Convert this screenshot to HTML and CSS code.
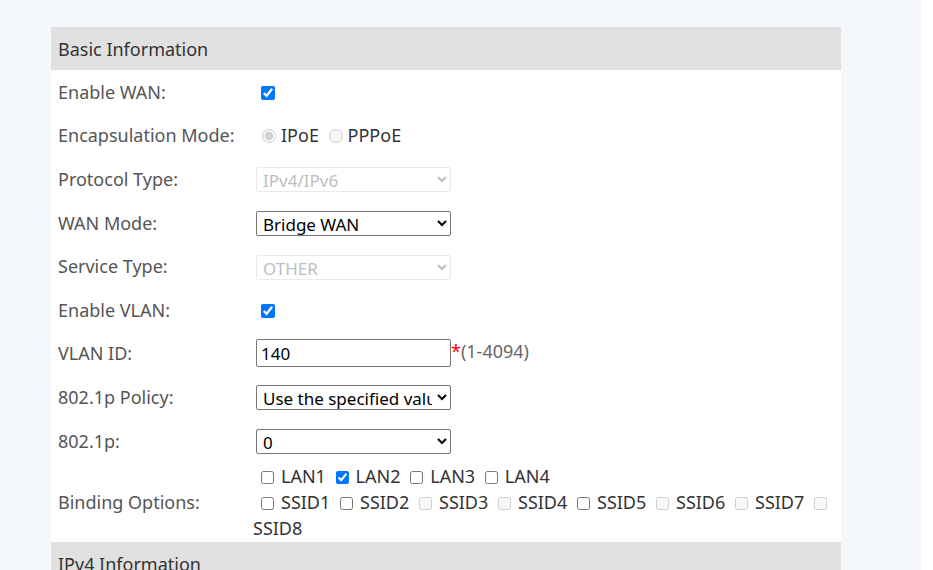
FILE: index.html
```html
<!DOCTYPE html>
<html lang="en">
<head>
  <meta charset="UTF-8">
  <title>WAN Configuration</title>
  <link rel="stylesheet" href="styles.css">
</head>
<body>
  <div class="page">
    <table class="form">
      <tr class="section"><td colspan="2">Basic Information</td></tr>
      <tr>
        <td class="label">Enable WAN:</td>
        <td><input type="checkbox" class="single" checked></td>
      </tr>
      <tr>
        <td class="label">Encapsulation Mode:</td>
        <td class="radios">
          <label class="opt"><input type="radio" name="encap" checked disabled>IPoE</label>
          <label class="opt"><input type="radio" name="encap" disabled>PPPoE</label>
        </td>
      </tr>
      <tr>
        <td class="label">Protocol Type:</td>
        <td><select disabled><option>IPv4/IPv6</option></select></td>
      </tr>
      <tr>
        <td class="label">WAN Mode:</td>
        <td><select><option>Bridge WAN</option><option>Route WAN</option></select></td>
      </tr>
      <tr>
        <td class="label">Service Type:</td>
        <td><select disabled><option>OTHER</option></select></td>
      </tr>
      <tr>
        <td class="label">Enable VLAN:</td>
        <td><input type="checkbox" class="single" checked></td>
      </tr>
      <tr>
        <td class="label">VLAN ID:</td>
        <td><input type="text" class="text" value="140"><span class="req">*</span><span class="hint">(1-4094)</span></td>
      </tr>
      <tr>
        <td class="label">802.1p Policy:</td>
        <td><select><option>Use the specified value</option></select></td>
      </tr>
      <tr>
        <td class="label">802.1p:</td>
        <td><select><option>0</option></select></td>
      </tr>
      <tr class="binding">
        <td class="label">Binding Options:</td>
        <td>
          <div class="opts">
            <label class="opt"><input type="checkbox">LAN1</label>
            <label class="opt"><input type="checkbox" checked>LAN2</label>
            <label class="opt"><input type="checkbox">LAN3</label>
            <label class="opt"><input type="checkbox">LAN4</label>
          </div>
          <div class="opts">
            <label class="opt"><input type="checkbox">SSID1</label>
            <label class="opt"><input type="checkbox">SSID2</label>
            <label class="opt"><input type="checkbox" disabled>SSID3</label>
            <label class="opt"><input type="checkbox" disabled>SSID4</label>
            <label class="opt"><input type="checkbox">SSID5</label>
            <label class="opt"><input type="checkbox" disabled>SSID6</label>
            <label class="opt"><input type="checkbox" disabled>SSID7</label>
            <label class="opt"><input type="checkbox" disabled> SSID8</label>
          </div>
        </td>
      </tr>
      <tr class="section"><td colspan="2">IPv4 Information</td></tr>
    </table>
  </div>
</body>
</html>
```

FILE: styles.css
```css
* {
  box-sizing: border-box;
}

html, body {
  margin: 0;
  background-color: #ffffff;
  font-family: "Noto Sans", "Segoe UI", sans-serif;
  font-size: 18px;
}

.page {
  width: 921px;
  min-height: 570px;
  background-color: #f4f7fc;
  padding: 27px 80px 0 51px;
}

.form {
  width: 790px;
  background-color: #ffffff;
  border-collapse: collapse;
}

.form td {
  padding: 0 8px 0 0;
  height: 43.6px;
  vertical-align: middle;
}

.form td.label,
.section td {
  padding-left: 7px;
}

.section td {
  background-color: #e1e1e1;
  color: #333333;
  height: 43px;
}

.label {
  width: 202px;
  color: #555555;
  white-space: nowrap;
}

input[type="checkbox"],
input[type="radio"] {
  width: 13px;
  height: 13px;
  margin: 0 7px 0 5px;
  vertical-align: -1px;
}

input.single {
  width: 14px;
  height: 14px;
  margin-left: 8px;
}

.radios input[type="radio"] {
  width: 14px;
  height: 14px;
  margin: 0 5px 0 9px;
}

.radios .opt + .opt input[type="radio"] {
  margin-left: 5px;
}

.opt {
  color: #333333;
}

select,
.text {
  width: 195px;
  height: 25px;
  font-family: inherit;
  font-size: 17px;
  color: #000000;
  border: 1px solid #767676;
  border-radius: 2px;
  background-color: #ffffff;
  padding: 0 2px;
  margin: 0 0 0 3px;
  vertical-align: middle;
}

select:disabled {
  color: #a3a3a3;
  border-color: #e2e2e2;
}

.text {
  height: 28px;
  padding: 0 4px;
}

.req {
  color: #ff0000;
}

.hint {
  color: #666666;
}

.binding td {
  height: 80px;
  line-height: 26px;
}

.binding td + td {
  padding-right: 0;
}

.binding .opts {
  display: block;
  text-indent: 3px;
}
```
